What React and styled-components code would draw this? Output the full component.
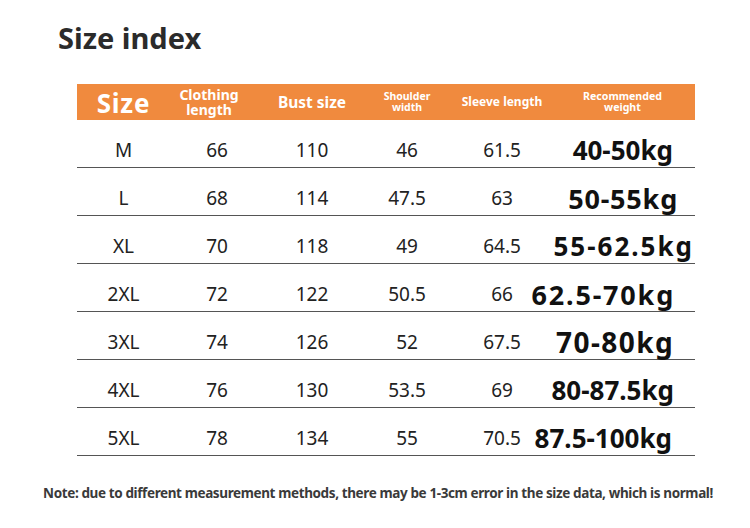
import React from "react";
import styled, { createGlobalStyle } from "styled-components";

const GlobalStyle = createGlobalStyle`
  html, body { margin: 0; padding: 0; background: #ffffff; }
  body { font-family: "Noto Sans", "Open Sans", sans-serif; }
  * { box-sizing: border-box; }
`;

const Page = styled.div`
  width: 750px;
  height: 528px;
  display: flex;
  flex-direction: column;
  background: #ffffff;
  overflow: hidden;
`;

const Title = styled.h1`
  margin: 23px 0 0 58px;
  font-size: 29px;
  line-height: 30px;
  font-weight: 700;
  color: #2b2b2b;
`;

const Table = styled.div`
  margin: 31px 0 0 77px;
  width: 618px;
  display: flex;
  flex-direction: column;
`;

const COLS = "93px 94px 96px 94px 96px 145px";

const HeaderRow = styled.div`
  display: grid;
  grid-template-columns: ${COLS};
  height: 36px;
  background: #f08a3e;
  color: #ffffff;
`;

const HeadCell = styled.div`
  display: flex;
  align-items: center;
  justify-content: center;
  text-align: center;
  font-weight: 700;
  font-size: ${(p) => p.$size}px;
  line-height: ${(p) => p.$lh || p.$size}px;
  letter-spacing: ${(p) => p.$ls || 0}px;
  padding-right: ${(p) => p.$nudge || 0}px;
  padding-top: ${(p) => p.$top || 0}px;
`;

const Row = styled.div`
  display: grid;
  grid-template-columns: ${COLS};
  height: 48px;
  padding-top: 13px;
  border-bottom: 1.5px solid #555555;
`;

const Cell = styled.div`
  display: flex;
  align-items: center;
  justify-content: center;
  font-size: 19px;
  line-height: 19px;
  font-weight: 400;
  color: #222222;
`;

const WeightCell = styled.div`
  display: flex;
  align-items: center;
  justify-content: flex-end;
  padding-right: ${(p) => p.$pr}px;
  font-size: ${(p) => p.$size}px;
  line-height: ${(p) => p.$size}px;
  letter-spacing: ${(p) => p.$ls}px;
  font-weight: 700;
  color: #111111;
  white-space: nowrap;
`;

const Note = styled.p`
  margin: 30px 0 0 0;
  padding-left: 6px;
  text-align: center;
  font-size: 13.5px;
  line-height: 14px;
  font-weight: 700;
  color: #3a3a3a;
  letter-spacing: -0.38px;
  white-space: nowrap;
`;

const rows = [
  { size: "M", len: "66", bust: "110", sh: "46", sl: "61.5", w: "40-50kg", fs: 26, ls: 0, pr: 22 },
  { size: "L", len: "68", bust: "114", sh: "47.5", sl: "63", w: "50-55kg", fs: 27, ls: 0.8, pr: 17 },
  { size: "XL", len: "70", bust: "118", sh: "49", sl: "64.5", w: "55-62.5kg", fs: 26, ls: 2, pr: 1 },
  { size: "2XL", len: "72", bust: "122", sh: "50.5", sl: "66", w: "62.5-70kg", fs: 27, ls: 1.8, pr: 20 },
  { size: "3XL", len: "74", bust: "126", sh: "52", sl: "67.5", w: "70-80kg", fs: 28, ls: 1.4, pr: 21 },
  { size: "4XL", len: "76", bust: "130", sh: "53.5", sl: "69", w: "80-87.5kg", fs: 26, ls: 0, pr: 21 },
  { size: "5XL", len: "78", bust: "134", sh: "55", sl: "70.5", w: "87.5-100kg", fs: 26, ls: 0, pr: 23 },
];

export default function App() {
  return (
    <Page>
      <GlobalStyle />
      <Title>Size index</Title>
      <Table>
        <HeaderRow>
          <HeadCell $size={26} $ls={0.8} $top={2}>Size</HeadCell>
          <HeadCell $size={14} $lh={15} $nudge={16}>
            Clothing
            <br />
            length
          </HeadCell>
          <HeadCell $size={15.5} $top={1}>Bust size</HeadCell>
          <HeadCell $size={10.5} $lh={11.5}>
            Shoulder
            <br />
            width
          </HeadCell>
          <HeadCell $size={12}>Sleeve length</HeadCell>
          <HeadCell $size={10.6} $lh={11.5}>
            Recommended
            <br />
            weight
          </HeadCell>
        </HeaderRow>
        {rows.map((r) => (
          <Row key={r.size}>
            <Cell>{r.size}</Cell>
            <Cell>{r.len}</Cell>
            <Cell>{r.bust}</Cell>
            <Cell>{r.sh}</Cell>
            <Cell>{r.sl}</Cell>
            <WeightCell $size={r.fs} $ls={r.ls} $pr={r.pr}>
              {r.w}
            </WeightCell>
          </Row>
        ))}
      </Table>
      <Note>
        Note: due to different measurement methods, there may be 1-3cm error in the size data, which is normal!
      </Note>
    </Page>
  );
}
